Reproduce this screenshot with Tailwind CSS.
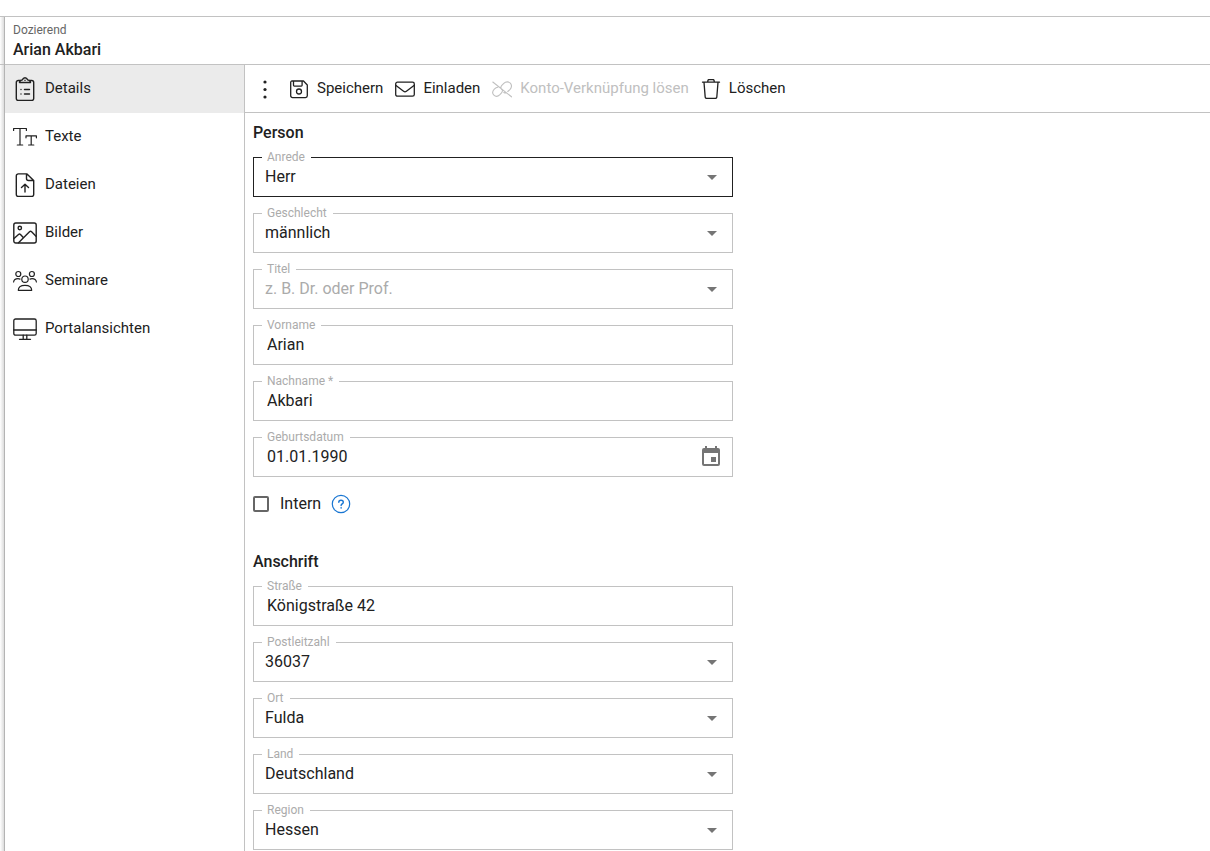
<!DOCTYPE html>
<html lang="de">
<head>
<meta charset="utf-8">
<meta name="viewport" content="width=device-width, initial-scale=1">
<title>Dozierend – Arian Akbari</title>
<script src="https://cdn.jsdelivr.net/npm/@tailwindcss/browser@4"></script>
</head>
<body class="bg-white font-[Roboto,sans-serif] text-[#212121]">
<div class="flex min-h-screen flex-col pt-4">
  <div class="flex grow border-t border-[#c2c2c2]">
    <div class="flex w-1 shrink-0 flex-col bg-linear-to-r from-white to-[#dcdcdc]">
      <div class="h-12 border-b border-[#c2c2c2]"></div>
    </div>
    <div class="flex min-w-0 grow flex-col border-l border-[#b4b4b4]">
      <header class="flex h-12 flex-col border-b border-[#c2c2c2] pl-2 pt-1">
        <p class="text-xs leading-[18px] text-[#666666]">Dozierend</p>
        <h1 class="text-base font-medium leading-[22px]">Arian Akbari</h1>
      </header>
      <div class="flex grow">
        <nav class="w-60 shrink-0 border-r border-[#c2c2c2] text-[15px]" aria-label="Bereiche">
          <a href="#details" aria-current="page" class="flex h-12 items-center gap-2 bg-[#ebebeb] px-2">
            <svg class="size-6" viewBox="0 0 24 24" fill="none" stroke="currentColor" stroke-width="1.4" stroke-linecap="round" stroke-linejoin="round"><path d="M7.500 3.500H5.300a2 2 0 0 0-2 2v16a2 2 0 0 0 2 2h13.400a2 2 0 0 0 2-2v-16a2 2 0 0 0-2-2h-2.200M6.500 5.500c0-1.600 1.200-2.200 2.800-2.600.6-1.400 1.500-2.100 2.700-2.100s2.100.7 2.700 2.100c1.600.4 2.800 1 2.800 2.600zM12 3.300v.1M8 12.500v.1M8 17v.1M11.500 12.500h5M11.500 17h5"/></svg>
            <span class="pb-0.5">Details</span></a>
          <a href="#texte" class="flex h-12 items-center gap-2 px-2">
            <svg class="size-6" viewBox="0 0 24 24" fill="none" stroke="currentColor" stroke-width="1.200" stroke-linecap="round" stroke-linejoin="round"><path d="M.6 5.500V3.500h12.800v2M7 3.500v16.500M4.300 20h5.400M13 12.800v-2h10.400v2M18.200 10.800v9.200M15.600 20h5.200"/></svg>
            <span class="pb-0.5">Texte</span></a>
          <a href="#dateien" class="flex h-12 items-center gap-2 px-2">
            <svg class="size-6" viewBox="0 0 24 24" fill="none" stroke="currentColor" stroke-width="1.400" stroke-linecap="round" stroke-linejoin="round"><path d="M14 .9H5.300a2 2 0 0 0-2 2v18.600a2 2 0 0 0 2 2h13.400a2 2 0 0 0 2-2V7.500zM13.500 1v4.500a2 2 0 0 0 2 2h5M12 19v-7.500M8.500 14.500l3.500-3.300 3.500 3.300"/></svg>
            <span class="pb-0.5">Dateien</span></a>
          <a href="#bilder" class="flex h-12 items-center gap-2 px-2">
            <svg class="size-6" viewBox="0 0 24 24" fill="none" stroke="currentColor" stroke-width="1.400" stroke-linecap="round" stroke-linejoin="round"><rect x=".8" y="2" width="22.400" height="20" rx="2"/><circle cx="6.800" cy="7" r="1.700"/><path d="M1 17.500l4.500-4a1.500 1.500 0 0 1 2 0l2.300 2.500M5.500 21.800l11-11a1.500 1.500 0 0 1 2.100 0l4.400 4.400"/></svg>
            <span class="pb-0.5">Bilder</span></a>
          <a href="#seminare" class="flex h-12 items-center gap-2 px-2">
            <svg class="size-6" viewBox="0 0 24 24" fill="none" stroke="currentColor" stroke-width="1.200" stroke-linecap="round" stroke-linejoin="round"><circle cx="5.300" cy="5" r="2.500"/><circle cx="18.900" cy="5" r="2.500"/><circle cx="12" cy="10.200" r="3.200"/><path d="M.6 13c.3-2.300 2-3.300 4.400-3.300.8 0 1.400.1 2 .4M23.400 13c-.3-2.300-2-3.300-4.400-3.300-.8 0-1.400.1-2 .4M5.300 21.300c0-3.200 2.700-5 6.700-5s6.700 1.800 6.700 5z"/></svg>
            <span class="pb-0.5">Seminare</span></a>
          <a href="#portalansichten" class="flex h-12 items-center gap-2 px-2">
            <svg class="size-6" viewBox="0 0 24 24" fill="none" stroke="currentColor" stroke-width="1.300" stroke-linecap="round" stroke-linejoin="round"><rect x=".8" y="2" width="22.400" height="16.200" rx="1.800"/><path d="M.8 13h22.400M10.200 18.200v3.800M13.800 18.200v3.800M6.500 22.300h11"/></svg>
            <span class="pb-0.5">Portalansichten</span></a>
        </nav>
        <main class="min-w-0 grow">
          <div role="toolbar" aria-label="Aktionen" class="flex h-12 items-center gap-3 border-b border-[#c2c2c2] px-2 text-[15px]">
            <button type="button" aria-label="Mehr" class="flex w-6 justify-center">
              <svg class="size-6" viewBox="0 0 24 24" fill="currentColor"><circle cx="12" cy="5" r="1.600"/><circle cx="12" cy="12.500" r="1.600"/><circle cx="12" cy="20" r="1.600"/></svg>
            </button>
            <button type="button" class="flex items-center gap-2">
              <svg class="size-5" viewBox="0 0 20 20" fill="none" stroke="currentColor" stroke-width="1.300" stroke-linecap="round" stroke-linejoin="round"><path d="M3 2h11.500L18.300 6v10.800a1.800 1.800 0 0 1-1.800 1.800h-13a1.800 1.800 0 0 1-1.800-1.800V3.300A1.300 1.300 0 0 1 3 2zM4.500 2v4.300a.8.8 0 0 0 .8.800h7a.8.8 0 0 0 .8-.8V2"/><circle cx="10" cy="12.500" r="2.500"/></svg>
              Speichern</button>
            <button type="button" class="flex items-center gap-2">
              <svg class="size-5" viewBox="0 0 20 20" fill="none" stroke="currentColor" stroke-width="1.300" stroke-linecap="round" stroke-linejoin="round"><rect x=".7" y="3.200" width="18.600" height="14" rx="1.800"/><path d="M1 6.500l7.600 5.800a2.300 2.300 0 0 0 2.800 0L19 6.500"/></svg>
              Einladen</button>
            <button type="button" disabled class="flex items-center gap-2 text-[#c0c0c0]">
              <svg class="size-5" viewBox="0 0 20 20" fill="none" stroke="currentColor" stroke-width="1.100" stroke-linecap="round" stroke-linejoin="round"><path d="M.8 3l18.700 14.800M5.800 8.200C4.600 8.300 3.600 8.900 2.300 10.200.2 12.400.4 14.700 1.900 16.200s4 1.500 6-.5l1.400-1.500c1.200-1.300 1.400-2.600.9-3.900M9.600 10.300c-1-1.300-.9-2.700.2-3.900l2-2c2-2 4.900-1.900 6.500-.3s1.600 4.400-.2 6.200l-2.300 2.200M11.800 13.500c.7.400 1.300.6 2.100.5"/></svg>
              Konto-Verknüpfung lösen</button>
            <button type="button" class="flex items-center gap-2">
              <svg class="size-5" viewBox="0 0 20 20" fill="none" stroke="currentColor" stroke-width="1.300" stroke-linecap="round" stroke-linejoin="round"><path d="M1.500 3.200h17M6.800 3V2a1.500 1.500 0 0 1 1.500-1.500h3.400A1.500 1.500 0 0 1 13.200 2v1M3 3.400l1.200 14.700a1.500 1.500 0 0 0 1.500 1.300h8.600a1.500 1.500 0 0 0 1.500-1.300L17 3.400"/></svg>
              Löschen</button>
          </div>
          <form class="flex max-w-[496px] flex-col px-2 pt-2">
            <h2 class="mb-3 text-base font-medium leading-6">Person</h2>
            <div class="flex flex-col gap-4">
              <div class="relative">
                <label for="anrede" class="absolute -top-2 left-[9px] bg-white pl-[5px] pr-1.5 text-xs leading-4 text-[#ababab]">Anrede</label>
                <select id="anrede" class="block h-10 w-full appearance-none border border-[#212121] bg-transparent pl-[11px] pr-10 text-base outline-none"><option>Herr</option></select>
                <svg class="pointer-events-none absolute right-4 top-[18px] h-[5px] w-[10px]" viewBox="0 0 10 5" fill="#757575"><path d="M0 0h10L5 5z"/></svg>
              </div>
              <div class="relative">
                <label for="geschlecht" class="absolute -top-2 left-[9px] bg-white pl-[5px] pr-1.5 text-xs leading-4 text-[#ababab]">Geschlecht</label>
                <select id="geschlecht" class="block h-10 w-full appearance-none border border-[#c2c2c2] bg-transparent pl-[11px] pr-10 text-base outline-none"><option>männlich</option></select>
                <svg class="pointer-events-none absolute right-4 top-[18px] h-[5px] w-[10px]" viewBox="0 0 10 5" fill="#757575"><path d="M0 0h10L5 5z"/></svg>
              </div>
              <div class="relative">
                <label for="titel" class="absolute -top-2 left-[9px] bg-white pl-[5px] pr-1.5 text-xs leading-4 text-[#ababab]">Titel</label>
                <select id="titel" class="block h-10 w-full appearance-none border border-[#c2c2c2] bg-transparent pl-[11px] pr-10 text-base text-[#ababab] outline-none"><option value="">z. B. Dr. oder Prof.</option></select>
                <svg class="pointer-events-none absolute right-4 top-[18px] h-[5px] w-[10px]" viewBox="0 0 10 5" fill="#757575"><path d="M0 0h10L5 5z"/></svg>
              </div>
              <div class="relative">
                <label for="vorname" class="absolute -top-2 left-[9px] bg-white pl-[5px] pr-1.5 text-xs leading-4 text-[#ababab]">Vorname</label>
                <input id="vorname" type="text" value="Arian" class="block h-10 w-full border border-[#c2c2c2] bg-transparent px-[13px] pb-0.5 text-base outline-none">
              </div>
              <div class="relative">
                <label for="nachname" class="absolute -top-2 left-[9px] bg-white pl-[5px] pr-1.5 text-xs leading-4 text-[#ababab]">Nachname *</label>
                <input id="nachname" type="text" required value="Akbari" class="block h-10 w-full border border-[#c2c2c2] bg-transparent px-[13px] pb-0.5 text-base outline-none">
              </div>
              <div class="relative">
                <label for="geburtsdatum" class="absolute -top-2 left-[9px] bg-white pl-[5px] pr-1.5 text-xs leading-4 text-[#ababab]">Geburtsdatum</label>
                <input id="geburtsdatum" type="text" value="01.01.1990" class="block h-10 w-full border border-[#c2c2c2] bg-transparent pl-[13px] pr-10 pb-0.5 text-base outline-none">
                <button type="button" aria-label="Kalender öffnen" class="absolute right-[10px] top-2">
                  <svg class="size-6" viewBox="0 0 24 24" fill="#757575"><path fill-rule="evenodd" d="M6 1h2v2h8V1h2v2h1a2 2 0 0 1 2 2v14a2 2 0 0 1-2 2H5a2 2 0 0 1-2-2V5a2 2 0 0 1 2-2h1zM5 8v11h14V8z"/><path d="M12 12h5v5h-5z"/></svg>
                </button>
              </div>
              <div class="flex h-[22px] items-center">
                <input id="intern" type="checkbox" class="size-4 appearance-none rounded-xs border-2 border-[#666666] checked:bg-[#666666]">
                <label for="intern" class="pl-[11px] text-base leading-5">Intern</label>
                <button type="button" aria-label="Hilfe" class="ml-2.5">
                  <svg class="size-5" viewBox="0 0 20 20" fill="none" stroke="#1976d2" stroke-linecap="round"><circle cx="10" cy="10" r="8.700" stroke-width="1.200"/><path d="M7.800 8.300c0-1.400 1-2.100 2.200-2.100s2.300.7 2.300 2c0 1.700-2.200 1.700-2.200 3.300" stroke-width="1.400"/><path d="M10.100 13.800v.1" stroke-width="1.500"/></svg>
                </button>
              </div>
            </div>
            <h2 class="mb-3 mt-[35px] text-base font-medium leading-6">Anschrift</h2>
            <div class="flex flex-col gap-4">
              <div class="relative">
                <label for="strasse" class="absolute -top-2 left-[9px] bg-white pl-[5px] pr-1.5 text-xs leading-4 text-[#ababab]">Straße</label>
                <input id="strasse" type="text" value="Königstraße 42" class="block h-10 w-full border border-[#c2c2c2] bg-transparent px-[13px] pb-0.5 text-base outline-none">
              </div>
              <div class="relative">
                <label for="plz" class="absolute -top-2 left-[9px] bg-white pl-[5px] pr-1.5 text-xs leading-4 text-[#ababab]">Postleitzahl</label>
                <select id="plz" class="block h-10 w-full appearance-none border border-[#c2c2c2] bg-transparent pl-[11px] pr-10 text-base outline-none"><option>36037</option></select>
                <svg class="pointer-events-none absolute right-4 top-[18px] h-[5px] w-[10px]" viewBox="0 0 10 5" fill="#757575"><path d="M0 0h10L5 5z"/></svg>
              </div>
              <div class="relative">
                <label for="ort" class="absolute -top-2 left-[9px] bg-white pl-[5px] pr-1.5 text-xs leading-4 text-[#ababab]">Ort</label>
                <select id="ort" class="block h-10 w-full appearance-none border border-[#c2c2c2] bg-transparent pl-[11px] pr-10 text-base outline-none"><option>Fulda</option></select>
                <svg class="pointer-events-none absolute right-4 top-[18px] h-[5px] w-[10px]" viewBox="0 0 10 5" fill="#757575"><path d="M0 0h10L5 5z"/></svg>
              </div>
              <div class="relative">
                <label for="land" class="absolute -top-2 left-[9px] bg-white pl-[5px] pr-1.5 text-xs leading-4 text-[#ababab]">Land</label>
                <select id="land" class="block h-10 w-full appearance-none border border-[#c2c2c2] bg-transparent pl-[11px] pr-10 text-base outline-none"><option>Deutschland</option></select>
                <svg class="pointer-events-none absolute right-4 top-[18px] h-[5px] w-[10px]" viewBox="0 0 10 5" fill="#757575"><path d="M0 0h10L5 5z"/></svg>
              </div>
              <div class="relative">
                <label for="region" class="absolute -top-2 left-[9px] bg-white pl-[5px] pr-1.5 text-xs leading-4 text-[#ababab]">Region</label>
                <select id="region" class="block h-10 w-full appearance-none border border-[#c2c2c2] bg-transparent pl-[11px] pr-10 text-base outline-none"><option>Hessen</option></select>
                <svg class="pointer-events-none absolute right-4 top-[18px] h-[5px] w-[10px]" viewBox="0 0 10 5" fill="#757575"><path d="M0 0h10L5 5z"/></svg>
              </div>
            </div>
          </form>
        </main>
      </div>
    </div>
  </div>
</div>
</body>
</html>
